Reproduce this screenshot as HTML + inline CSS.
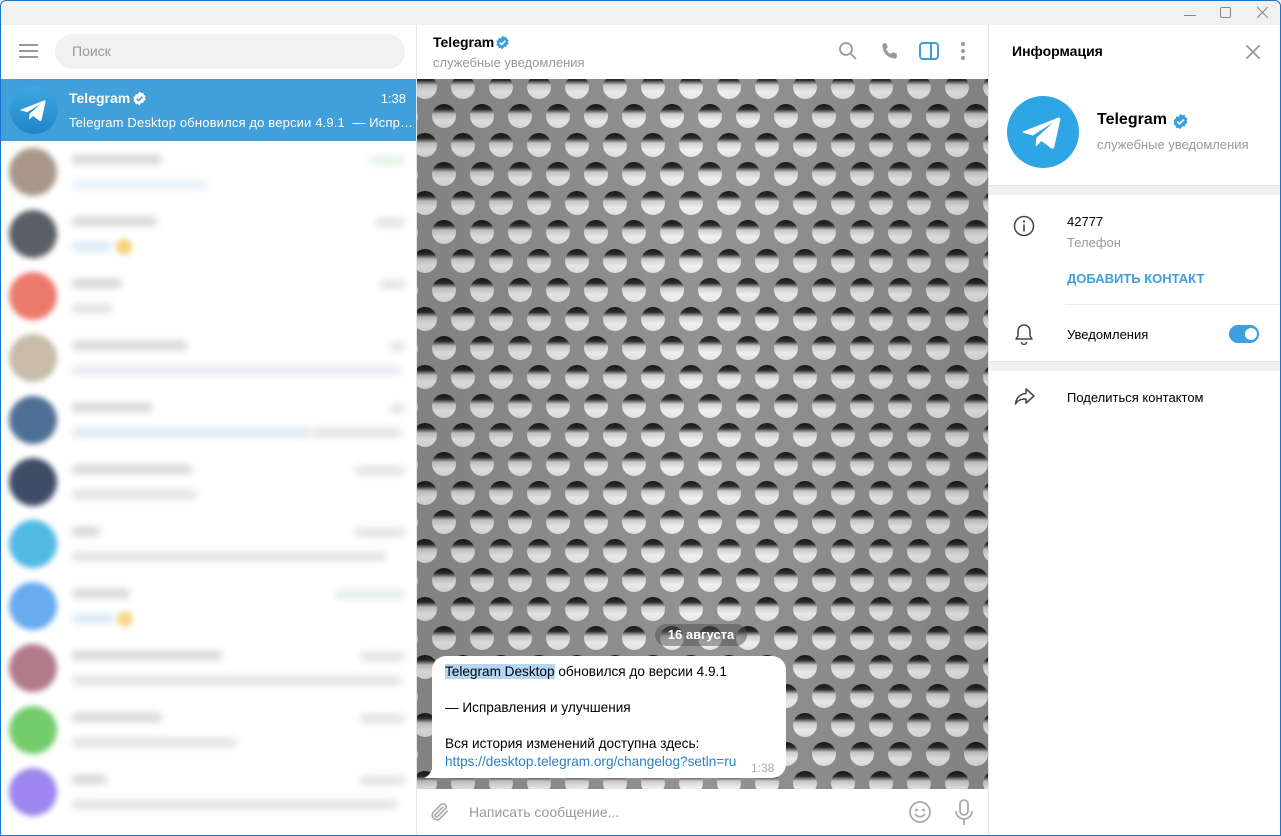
<!DOCTYPE html>
<html><head><meta charset="utf-8">
<style>
*{box-sizing:border-box;margin:0;padding:0}
body{width:1281px;height:836px;overflow:hidden;font-family:"Liberation Sans","DejaVu Sans",sans-serif;background:#fff;position:relative}
.win{position:absolute;inset:0;overflow:hidden;background:#fff}
.frame{position:absolute;inset:0;border:1px solid #1a73d0;border-radius:6px 6px 0 0;pointer-events:none;z-index:10}
.title{position:absolute;left:0;top:0;width:1281px;height:25px;background:#f1f1f1}
.abs{position:absolute}
.row{position:absolute;left:0;width:416px;height:62px}
.av{position:absolute;left:9px;top:7px;width:48px;height:48px;border-radius:50%;filter:blur(3px)}
.bar{position:absolute;height:9px;border-radius:4px;filter:blur(4px);background:#e0e0e0}
</style></head><body>
<div class="win">
<div class="title"></div>
<div class="abs" style="left:1184px;top:15px;width:12px;height:1px;background:#888"></div>
<div class="abs" style="left:1220px;top:7px;width:11px;height:11px;border:1px solid #888;border-radius:2px"></div>
<svg class="abs" style="left:1257px;top:7px" width="11" height="11"><path d="M0 0L11 11M11 0L0 11" stroke="#888" stroke-width="1.1"/></svg>

<div class="abs" style="left:0;top:25px;width:417px;height:811px;background:#fff;border-right:1px solid #e6e6e6"></div>
<svg class="abs" style="left:19px;top:44px" width="19" height="14"><path d="M0 1H19M0 7H19M0 13H19" stroke="#999" stroke-width="2"/></svg>
<div class="abs" style="left:55px;top:34px;width:350px;height:35px;border-radius:18px;background:#f1f1f1;color:#999;font-size:14px;line-height:35px;padding-left:17px">Поиск</div>

<div class="row" style="top:79px;background:#419fd9">
  <svg class="abs" style="left:10px;top:7px" width="48" height="48" viewBox="0 0 48 48"><defs><linearGradient id="tg" x1="0" y1="0" x2="0" y2="1"><stop offset="0" stop-color="#3ea8e2"/><stop offset="1" stop-color="#1f86c7"/></linearGradient></defs><circle cx="24" cy="24" r="24" fill="url(#tg)"/><path d="M11 23.5L34 14.5C35 14.2 35.8 14.8 35.5 16L31.5 34C31.2 35.2 30.3 35.4 29.4 34.8L23 30 20 33C19.6 33.4 19.2 33.5 19 33L19.6 27.8 31 17.5 17.2 26.3 11.2 24.6C10 24.2 10 23.8 11 23.5Z" fill="#fff"/></svg>
  <div class="abs" style="left:69px;top:11px;color:#fff;font-weight:bold;font-size:14px">Telegram</div>
  <svg class="abs" style="left:132px;top:12px" width="15" height="15" viewBox="0 0 24 24"><path d="M12 1l2.6 2.2 3.4-.3.9 3.3 3 1.6-1.2 3.2 1.2 3.2-3 1.6-.9 3.3-3.4-.3L12 23l-2.6-2.2-3.4.3-.9-3.3-3-1.6L3.3 13 2.1 9.8l3-1.6.9-3.3 3.4.3z" fill="#fff"/><path d="M7.5 12.3l3 3 6-6" stroke="#419fd9" stroke-width="2.4" fill="none"/></svg>
  <div class="abs" style="right:10px;top:12px;color:#fff;font-size:13px">1:38</div>
  <div class="abs" style="left:69px;top:36px;color:#fff;font-size:13px;white-space:nowrap;letter-spacing:0.15px">Telegram Desktop обновился до версии 4.9.1&nbsp; — Испр…</div>
</div>

<div class="row" style="top:141px"><div class="av" style="background:#a8978a"></div><div class="bar" style="left:72px;top:14px;width:90px;background:#d4d4d4"></div><div class="bar" style="left:370px;top:15px;width:35px;background:#e2f2e2"></div><div class="bar" style="left:72px;top:39px;width:135px;background:#e4edf6"></div></div>
<div class="row" style="top:203px"><div class="av" style="background:#5a5e66"></div><div class="bar" style="left:72px;top:14px;width:85px;background:#d4d4d4"></div><div class="bar" style="left:375px;top:15px;width:30px"></div><div class="bar" style="left:72px;top:39px;width:40px;background:#d6e7f6"></div><div class="abs" style="left:116px;top:36px;width:16px;height:16px;border-radius:50%;background:#f5d27a;filter:blur(3px)"></div></div>
<div class="row" style="top:265px"><div class="av" style="background:#ec7a6c"></div><div class="bar" style="left:72px;top:14px;width:50px;background:#d4d4d4"></div><div class="bar" style="left:380px;top:15px;width:25px"></div><div class="bar" style="left:72px;top:39px;width:40px"></div></div>
<div class="row" style="top:327px"><div class="av" style="background:#c8bba8"></div><div class="bar" style="left:72px;top:14px;width:115px;background:#d4d4d4"></div><div class="bar" style="left:390px;top:15px;width:15px"></div><div class="bar" style="left:72px;top:39px;width:330px;background:#e3eaf2"></div></div>
<div class="row" style="top:389px"><div class="av" style="background:#4e6f95"></div><div class="bar" style="left:72px;top:14px;width:80px;background:#d4d4d4"></div><div class="bar" style="left:390px;top:15px;width:15px"></div><div class="bar" style="left:72px;top:39px;width:240px;background:#d6e7f6"></div><div class="bar" style="left:312px;top:39px;width:90px"></div></div>
<div class="row" style="top:451px"><div class="av" style="background:#3f4c66"></div><div class="bar" style="left:72px;top:14px;width:120px;background:#d4d4d4"></div><div class="bar" style="left:355px;top:15px;width:50px"></div><div class="bar" style="left:72px;top:39px;width:125px"></div></div>
<div class="row" style="top:513px"><div class="av" style="background:#52b9e4"></div><div class="bar" style="left:72px;top:14px;width:28px;background:#d4d4d4"></div><div class="bar" style="left:355px;top:15px;width:50px"></div><div class="bar" style="left:72px;top:39px;width:315px"></div></div>
<div class="row" style="top:575px"><div class="av" style="background:#68abef"></div><div class="bar" style="left:72px;top:14px;width:58px;background:#d4d4d4"></div><div class="bar" style="left:335px;top:15px;width:70px;background:#e2ede2"></div><div class="bar" style="left:72px;top:39px;width:42px;background:#d6e7f6"></div><div class="abs" style="left:117px;top:36px;width:16px;height:16px;border-radius:50%;background:#f5d68a;filter:blur(3px)"></div></div>
<div class="row" style="top:637px"><div class="av" style="background:#b27a8a"></div><div class="bar" style="left:72px;top:14px;width:150px;background:#d4d4d4"></div><div class="bar" style="left:360px;top:15px;width:45px"></div><div class="bar" style="left:72px;top:39px;width:330px"></div></div>
<div class="row" style="top:699px"><div class="av" style="background:#74cc6c"></div><div class="bar" style="left:72px;top:14px;width:90px;background:#d4d4d4"></div><div class="bar" style="left:360px;top:15px;width:45px"></div><div class="bar" style="left:72px;top:39px;width:165px"></div></div>
<div class="row" style="top:761px"><div class="av" style="background:#9d86ef"></div><div class="bar" style="left:72px;top:14px;width:35px;background:#d4d4d4"></div><div class="bar" style="left:360px;top:15px;width:45px"></div><div class="bar" style="left:72px;top:39px;width:325px"></div></div>

<div class="abs" style="left:417px;top:25px;width:571px;height:54px;background:#fff"></div>
<div class="abs" style="left:433px;top:34px;font-weight:bold;font-size:14px;color:#000">Telegram</div>
<svg class="abs" style="left:495px;top:35px" width="15" height="15" viewBox="0 0 24 24"><path d="M12 1l2.6 2.2 3.4-.3.9 3.3 3 1.6-1.2 3.2 1.2 3.2-3 1.6-.9 3.3-3.4-.3L12 23l-2.6-2.2-3.4.3-.9-3.3-3-1.6L3.3 13 2.1 9.8l3-1.6.9-3.3 3.4.3z" fill="#3d9fe0"/><path d="M7.5 12.3l3 3 6-6" stroke="#fff" stroke-width="2.4" fill="none"/></svg>
<div class="abs" style="left:433px;top:55px;font-size:13px;color:#999">служебные уведомления</div>
<svg class="abs" style="left:838px;top:41px" width="20" height="20"><circle cx="8" cy="8" r="6" stroke="#999" stroke-width="1.8" fill="none"/><path d="M12.5 12.5L18 18" stroke="#999" stroke-width="1.8"/></svg>
<svg class="abs" style="left:880px;top:41px" width="20" height="20" viewBox="0 0 24 24"><path d="M6.6 2.5c.6 0 1 .3 1.2.9l1.3 3.3c.2.5 0 1.1-.4 1.5L7.2 9.6c1.2 2.6 3.3 4.7 5.9 5.9l1.4-1.5c.4-.4 1-.6 1.5-.4l3.3 1.3c.6.2.9.6.9 1.2V19c0 1.2-1 2.2-2.2 2.1C9.6 20.6 3.4 14.4 2.9 6.1 2.8 4.900 3.8 2.5 5 2.5z" fill="#999"/></svg>
<svg class="abs" style="left:919px;top:42px" width="20" height="18"><rect x="1" y="1" width="18" height="16" rx="3" stroke="#3d9fe0" stroke-width="2" fill="none"/><rect x="11" y="1" width="2" height="16" fill="#3d9fe0"/></svg>
<svg class="abs" style="left:960px;top:41px" width="6" height="20"><circle cx="3" cy="3" r="2" fill="#999"/><circle cx="3" cy="10" r="2" fill="#999"/><circle cx="3" cy="17" r="2" fill="#999"/></svg>

<svg class="abs" style="left:417px;top:79px" width="571" height="710">
<defs>
<linearGradient id="hg" x1="0" y1="0" x2="0" y2="1"><stop offset="0" stop-color="#161616"/><stop offset="0.22" stop-color="#2e2e2e"/><stop offset="0.42" stop-color="#d0d0d0"/><stop offset="0.7" stop-color="#f2f2f2"/><stop offset="1" stop-color="#e6e6e6"/></linearGradient>
<pattern id="pp" x="-11" y="-7" width="38" height="58" patternUnits="userSpaceOnUse">
<rect width="38" height="58" fill="#939393"/>
<circle cx="19" cy="15" r="12" fill="url(#hg)"/>
<circle cx="0" cy="44" r="12" fill="url(#hg)"/>
<circle cx="38" cy="44" r="12" fill="url(#hg)"/>
</pattern>
<linearGradient id="vg" x1="0" y1="0" x2="1" y2="0"><stop offset="0" stop-color="#000" stop-opacity=".12"/><stop offset=".5" stop-color="#000" stop-opacity="0"/><stop offset="1" stop-color="#000" stop-opacity=".12"/></linearGradient>
</defs>
<rect width="571" height="710" fill="url(#pp)"/>
<rect width="571" height="710" fill="url(#vg)"/>
</svg>

<div class="abs" style="left:655px;top:624px;width:92px;height:22px;border-radius:11px;background:rgba(80,80,80,.5);color:#fff;font-size:13px;font-weight:bold;text-align:center;line-height:22px">16 августа</div>

<div class="abs" style="left:432px;top:656px;width:354px;height:122px;background:#fff;border-radius:14px 14px 14px 4px"></div>
<svg class="abs" style="left:424px;top:764px" width="14" height="14"><path d="M14 0V14H0C5 12 8 8 9 0Z" fill="#fff"/></svg>
<div class="abs" style="left:445px;top:663px;font-size:13.6px;color:#000;line-height:18px;white-space:nowrap">
<span style="background:#b5d6f3">Telegram Desktop</span> обновился до версии 4.9.1<br><br>— Исправления и улучшения<br><br>Вся история изменений доступна здесь:<br><span style="color:#2b7fc6">https://desktop.telegram.org/changelog?setln=ru</span></div>
<div class="abs" style="left:751px;top:761px;font-size:12px;color:#aaa">1:38</div>

<div class="abs" style="left:417px;top:789px;width:571px;height:47px;background:#fff"></div>
<svg class="abs" style="left:429px;top:800px" width="22" height="24" viewBox="0 0 24 24"><path d="M20 11l-8.5 8.5a5 5 0 0 1-7-7L13 4a3.3 3.3 0 0 1 4.7 4.7L9.3 17a1.6 1.6 0 0 1-2.3-2.3L15 6.8" stroke="#aaa" stroke-width="1.8" fill="none" stroke-linecap="round"/></svg>
<div class="abs" style="left:469px;top:804px;font-size:14px;color:#999">Написать сообщение...</div>
<svg class="abs" style="left:908px;top:800px" width="24" height="24"><circle cx="12" cy="12" r="10" stroke="#aaa" stroke-width="1.8" fill="none"/><circle cx="8.5" cy="10" r="1.4" fill="#aaa"/><circle cx="15.5" cy="10" r="1.4" fill="#aaa"/><path d="M7.5 14.5c2.5 3 6.5 3 9 0" stroke="#aaa" stroke-width="1.8" fill="none" stroke-linecap="round"/></svg>
<svg class="abs" style="left:954px;top:799px" width="20" height="27"><rect x="6" y="1" width="8" height="15" rx="4" stroke="#aaa" stroke-width="1.8" fill="none"/><path d="M2 12a8 8 0 0 0 16 0M10 20v6" stroke="#aaa" stroke-width="1.8" fill="none"/></svg>

<div class="abs" style="left:988px;top:25px;width:1px;height:811px;background:#e6e6e6"></div>
<div class="abs" style="left:1012px;top:43px;font-size:14px;font-weight:bold;color:#000">Информация</div>
<svg class="abs" style="left:1246px;top:45px" width="14" height="14"><path d="M0 0L14 14M14 0L0 14" stroke="#999" stroke-width="1.8"/></svg>
<svg class="abs" style="left:1007px;top:96px" width="72" height="72" viewBox="0 0 48 48"><circle cx="24" cy="24" r="24" fill="#2ea6e5"/><path d="M11 23.5L34 14.5C35 14.2 35.8 14.8 35.5 16L31.5 34C31.2 35.2 30.3 35.4 29.4 34.8L23 30 20 33C19.6 33.4 19.2 33.5 19 33L19.6 27.8 31 17.5 17.2 26.3 11.2 24.6C10 24.2 10 23.8 11 23.5Z" fill="#fff"/></svg>
<div class="abs" style="left:1097px;top:111px;font-size:16px;font-weight:bold;color:#000">Telegram</div>
<svg class="abs" style="left:1172px;top:113px" width="17" height="17" viewBox="0 0 24 24"><path d="M12 1l2.6 2.2 3.4-.3.9 3.3 3 1.6-1.2 3.2 1.2 3.2-3 1.6-.9 3.3-3.4-.3L12 23l-2.6-2.2-3.4.3-.9-3.3-3-1.6L3.3 13 2.1 9.8l3-1.6.9-3.3 3.4.3z" fill="#3d9fe0"/><path d="M7.5 12.3l3 3 6-6" stroke="#fff" stroke-width="2.4" fill="none"/></svg>
<div class="abs" style="left:1097px;top:137px;font-size:13px;color:#999">служебные уведомления</div>
<div class="abs" style="left:989px;top:185px;width:292px;height:10px;background:#f1f1f1;border-top:1px solid #e4e4e4"></div>
<svg class="abs" style="left:1013px;top:215px" width="22" height="22"><circle cx="11" cy="11" r="9.5" stroke="#444" stroke-width="1.5" fill="none"/><rect x="10.2" y="9.5" width="1.6" height="7" fill="#444"/><circle cx="11" cy="6.5" r="1.1" fill="#444"/></svg>
<div class="abs" style="left:1067px;top:214px;font-size:13px;color:#000">42777</div>
<div class="abs" style="left:1067px;top:235px;font-size:13px;color:#999">Телефон</div>
<div class="abs" style="left:1067px;top:271px;font-size:13px;font-weight:bold;color:#3d9fe0">ДОБАВИТЬ КОНТАКТ</div>
<div class="abs" style="left:1065px;top:304px;width:216px;height:1px;background:#e8e8e8"></div>
<svg class="abs" style="left:1014px;top:323px" width="20" height="22"><path d="M10 2a6 6 0 0 0-6 6v5l-2 3h16l-2-3V8a6 6 0 0 0-6-6z" stroke="#444" stroke-width="1.5" fill="none" stroke-linejoin="round"/><path d="M7.5 19a2.5 2.5 0 0 0 5 0" stroke="#444" stroke-width="1.5" fill="none"/></svg>
<div class="abs" style="left:1067px;top:327px;font-size:13px;color:#000">Уведомления</div>
<div class="abs" style="left:1229px;top:325px;width:30px;height:18px;border-radius:9px;background:#3d9fe0"></div>
<div class="abs" style="left:1243px;top:326px;width:16px;height:16px;border-radius:50%;background:#fff;border:2px solid #3d9fe0"></div>
<div class="abs" style="left:989px;top:361px;width:292px;height:10px;background:#f1f1f1;border-top:1px solid #e4e4e4"></div>
<svg class="abs" style="left:1014px;top:388px" width="22" height="18" viewBox="0 0 22 18"><path d="M12 1l8 7-8 7v-4c-5 0-8 1-10.5 5 .8-6 4-10 10.5-10.5z" stroke="#444" stroke-width="1.5" fill="none" stroke-linejoin="round"/></svg>
<div class="abs" style="left:1067px;top:390px;font-size:13px;color:#000">Поделиться контактом</div>
</div>
<div class="frame"></div>
</body></html>
